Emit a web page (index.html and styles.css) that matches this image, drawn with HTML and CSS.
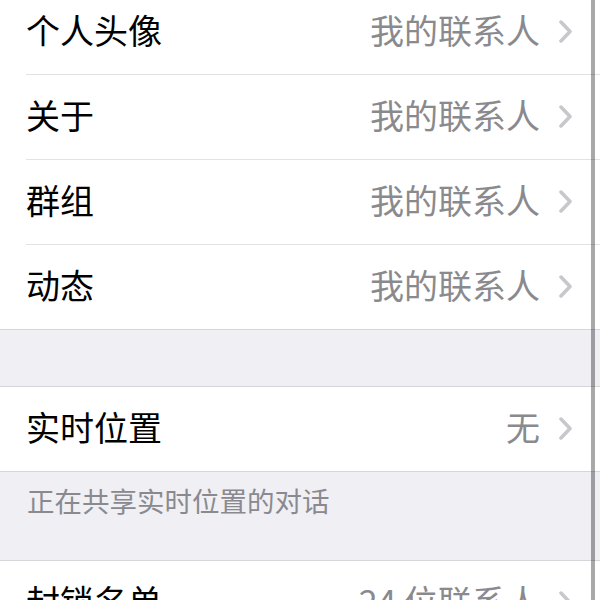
FILE: index.html
```html
<!DOCTYPE html>
<html lang="zh-CN">
<head>
    <meta charset="UTF-8">
    <meta name="viewport" content="width=device-width, initial-scale=1.0">
    <title>隐私</title>
    <link rel="stylesheet" href="styles.css">
</head>
<body>
    <div class="screen">
        <div class="group">
            <div class="cell">
                <div class="cell-inner">
                    <span class="cell-title">个人头像</span>
                    <span class="cell-value">我的联系人</span>
                    <svg class="chevron" viewBox="0 0 13 23"><path d="M2 2 L11 11.5 L2 21"/></svg>
                </div>
            </div>
            <div class="cell">
                <div class="cell-inner">
                    <span class="cell-title">关于</span>
                    <span class="cell-value">我的联系人</span>
                    <svg class="chevron" viewBox="0 0 13 23"><path d="M2 2 L11 11.5 L2 21"/></svg>
                </div>
            </div>
            <div class="cell">
                <div class="cell-inner">
                    <span class="cell-title">群组</span>
                    <span class="cell-value">我的联系人</span>
                    <svg class="chevron" viewBox="0 0 13 23"><path d="M2 2 L11 11.5 L2 21"/></svg>
                </div>
            </div>
            <div class="cell">
                <div class="cell-inner">
                    <span class="cell-title">动态</span>
                    <span class="cell-value">我的联系人</span>
                    <svg class="chevron" viewBox="0 0 13 23"><path d="M2 2 L11 11.5 L2 21"/></svg>
                </div>
            </div>
        </div>

        <div class="spacer"></div>

        <div class="group">
            <div class="cell">
                <div class="cell-inner">
                    <span class="cell-title">实时位置</span>
                    <span class="cell-value">无</span>
                    <svg class="chevron" viewBox="0 0 13 23"><path d="M2 2 L11 11.5 L2 21"/></svg>
                </div>
            </div>
        </div>
        <div class="footer">正在共享实时位置的对话</div>

        <div class="group">
            <div class="cell">
                <div class="cell-inner">
                    <span class="cell-title">封锁名单</span>
                    <span class="cell-value">24 位联系人</span>
                    <svg class="chevron" viewBox="0 0 13 23"><path d="M2 2 L11 11.5 L2 21"/></svg>
                </div>
            </div>
        </div>
    </div>
    <!-- scroll indicator on the right edge -->
    <div class="scrollbar"></div>
</body>
</html>
```

FILE: styles.css
```css
body {
    font-family: "Noto Sans CJK SC", "Noto Sans", sans-serif;
    background-color: #efeff4;
    margin: 0;
    padding: 0;
    height: 600px;
    overflow: hidden;
}

.screen {
    margin-top: -10px;
}

.group {
    background-color: #ffffff;
    border-top: 1px solid #d6d6da;
    border-bottom: 1px solid #d6d6da;
}

.group:first-child {
    border-top: none;
}

.cell {
    padding-left: 26px;
}

.cell-inner {
    display: flex;
    align-items: center;
    height: 84px;
    padding-right: 28px;
    border-bottom: 1px solid #e2e2e5;
}

.cell:last-child .cell-inner {
    border-bottom: none;
}

.cell-title,
.cell-value {
    font-size: 34px;
    line-height: 40px;
    padding-bottom: 4px;
}

.cell-title {
    flex: 1;
    color: #000000;
}

.cell-value {
    color: #8a8a8e;
    margin-right: 19px;
}

.chevron {
    width: 13px;
    height: 23px;
    flex-shrink: 0;
    margin-bottom: 2px;
}

.chevron path {
    fill: none;
    stroke: #c7c7cc;
    stroke-width: 3.5;
    stroke-linecap: round;
    stroke-linejoin: round;
}

.spacer {
    height: 56px;
}

.footer {
    height: 88px;
    box-sizing: border-box;
    padding: 10px 26px 0 27px;
    font-size: 27.5px;
    line-height: 36px;
    color: #8a8a8e;
}

.scrollbar {
    position: absolute;
    top: 0;
    left: 591px;
    width: 4px;
    height: 600px;
    background-color: rgba(0, 0, 0, 0.34);
}
```
